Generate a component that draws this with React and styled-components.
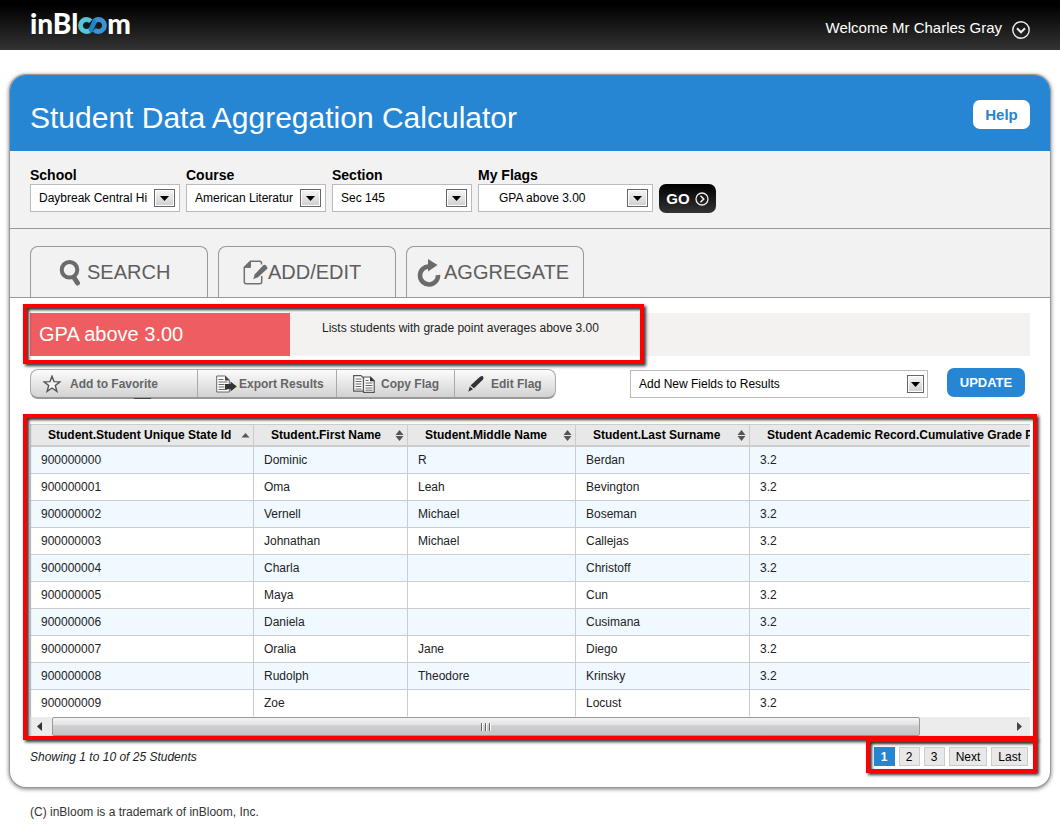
import React from "react";
import styled, { createGlobalStyle, css } from "styled-components";

const GlobalStyle = createGlobalStyle`
  *, *::before, *::after { box-sizing: border-box; }
  body {
    margin: 0;
    background: #fff;
    color: #222;
    font: 12px/16px "Liberation Sans", Arial, sans-serif;
  }
  button, select { font-family: inherit; margin: 0; }
`;

const TopBar = styled.header`
  display: flex;
  align-items: center;
  justify-content: space-between;
  height: 50px;
  padding: 0 30px;
  background: linear-gradient(#000 10%, #333);
`;

const Logo = styled.a`
  display: flex;
  align-items: baseline;
  color: #fff;
  font: 900 28px/28px Lato, "Liberation Sans", sans-serif;
  text-decoration: none;
  padding-bottom: 4px;
  svg { display: block; }
`;

const UserMenu = styled.button`
  display: flex;
  align-items: center;
  gap: 10px;
  padding: 9px 0 0;
  border: 0;
  background: none;
  color: #fff;
  font-size: 15px;
  line-height: 18px;
  span { padding-bottom: 4px; }
`;

const Page = styled.div`
  padding: 25px 10px 0;
`;

const Card = styled.main`
  border-radius: 16px;
  background: #fff;
  box-shadow: 0 0 0 1px #999, 0 1px 4px 1px #777;
`;

const TitleBand = styled.div`
  display: flex;
  align-items: center;
  justify-content: space-between;
  height: 76px;
  padding: 2px 20px 0;
  border-radius: 16px 16px 0 0;
  background: #2686d4;
`;

const Title = styled.h1`
  margin: 0;
  padding-top: 8px;
  color: #fff;
  font-size: 30px;
  line-height: 34px;
  font-weight: 400;
`;

const HelpButton = styled.button`
  width: 57px;
  height: 29px;
  padding: 0;
  border: 0;
  border-radius: 7px;
  background: #fff;
  color: #2686d4;
  font-size: 15px;
  font-weight: 700;
`;

const FilterBand = styled.form`
  display: flex;
  align-items: flex-end;
  gap: 6px;
  height: 78px;
  padding: 0 20px 16px;
  border-bottom: 1px solid #999;
  background: #f2f2f2;
`;

const Field = styled.div`
  display: flex;
  flex-direction: column;
  width: ${(p) => p.$width}px;
`;

const FieldLabel = styled.label`
  color: #000;
  font-size: 14px;
  line-height: 18px;
  font-weight: 700;
`;

const SelectBox = styled.div`
  position: relative;
  width: ${(p) => (p.$width ? `${p.$width}px` : "100%")};
`;

const Select = styled.select`
  display: block;
  appearance: none;
  width: 100%;
  height: 28px;
  padding: 0 32px 0 ${(p) => p.$indent || 8}px;
  border: 1px solid #bbb;
  border-radius: 0;
  background: #fff;
  color: #000;
  font-size: 12px;
`;

const Arrow = styled.span`
  position: absolute;
  top: 5px;
  right: ${(p) => (p.$narrow ? 4 : 5)}px;
  display: flex;
  align-items: center;
  justify-content: center;
  width: ${(p) => (p.$narrow ? 17 : 21)}px;
  height: 18px;
  border: 1px solid #666;
  background: linear-gradient(#f6f6f6, #cfcfcf);
  box-shadow: inset 0 0 0 1px #fff;
  pointer-events: none;
`;

const GoButton = styled.button`
  display: flex;
  align-items: center;
  justify-content: center;
  gap: 5px;
  width: 57px;
  height: 29px;
  margin-bottom: -1px;
  padding: 0;
  border: 0;
  border-radius: 7px;
  background: linear-gradient(#000, #333);
  color: #fff;
  font-size: 15px;
  font-weight: 700;
`;

const TabBand = styled.nav`
  display: flex;
  align-items: flex-end;
  gap: 10px;
  height: 69px;
  padding: 0 20px;
  border-bottom: 1px solid #999;
  background: #f2f2f2;
`;

const Tab = styled.button`
  display: flex;
  align-items: center;
  gap: ${(p) => p.$gap}px;
  width: 178px;
  height: 51px;
  padding: 1px 0 0 ${(p) => p.$pad}px;
  border: 1px solid #999;
  border-bottom: 0;
  border-radius: 8px 8px 0 0;
  background: #f2f2f2;
  color: #5e5e5e;
  font-size: 20px;
  svg { flex: none; }
`;

const Content = styled.div`
  padding: 15px 20px 21px;
`;

const Highlight = styled.div`
  position: absolute;
  top: -${(p) => p.$top}px;
  right: -${(p) => p.$right}px;
  bottom: -${(p) => p.$bottom}px;
  left: -${(p) => p.$left}px;
  border: 4px solid #f00;
  box-shadow: 2px 2px 3px #333, inset 2px 2px 3px #333;
  pointer-events: none;
`;

const Banner = styled.section`
  display: flex;
  height: 43px;
  background: #f3f2f1;
`;

const FlagInfo = styled.div`
  position: relative;
  display: flex;
  width: 607px;
`;

const FlagName = styled.h2`
  width: 260px;
  margin: 0;
  padding: 0 9px;
  background: #ee5e60;
  color: #fff;
  font-size: 20px;
  line-height: 43px;
  font-weight: 400;
`;

const FlagText = styled.p`
  margin: 0;
  padding: 7px 0 0 32px;
`;

const Actions = styled.div`
  display: flex;
  align-items: flex-start;
  margin-top: 13px;
  padding-right: 5px;
`;

const ButtonBar = styled.div`
  position: relative;
  display: flex;
  height: 30px;
  margin-right: auto;
  border: 1px solid #aaa;
  border-bottom: 2px solid #999;
  border-radius: 8px;
  background: linear-gradient(#fcfcfc, #d2d2d2);
  &::after {
    content: "";
    position: absolute;
    bottom: -2px;
    left: 103px;
    width: 17px;
    height: 1px;
    background: #444;
  }
`;

const BarButton = styled.button`
  display: flex;
  align-items: center;
  gap: ${(p) => p.$gap}px;
  width: ${(p) => p.$width}px;
  padding: 0 0 0 ${(p) => p.$pad}px;
  border: 0;
  border-right: 1px solid #aaa;
  background: none;
  color: #666;
  font-size: 12px;
  font-weight: 700;
  &:last-child { border-right: 0; }
  svg { flex: none; }
`;

const FieldPicker = styled.div`
  display: flex;
  align-items: flex-start;
  gap: 19px;
`;

const PickerSelect = styled.div`
  padding-top: 1px;
`;

const UpdateButton = styled.button`
  width: 78px;
  height: 29px;
  margin-top: -1px;
  padding: 0;
  border: 0;
  border-radius: 7px;
  background: #2686d4;
  color: #fff;
  font-size: 13px;
  font-weight: 700;
`;

const TablePanel = styled.div`
  position: relative;
  margin-top: 25px;
`;

const TableClip = styled.div`
  overflow: hidden;
  border-left: 1px solid #ccc;
`;

const Table = styled.table`
  width: 111%;
  table-layout: fixed;
  border-collapse: separate;
  border-spacing: 0;
`;

const HeadCell = styled.th`
  height: 23px;
  padding: 0 3px 0 17px;
  border-top: 1px solid #ccc;
  border-right: 1px solid #ccc;
  border-bottom: 2px solid #ccc;
  background: #e8e8e8;
  color: #000;
  font-size: 12px;
  line-height: 16px;
  text-align: left;
  white-space: nowrap;
  > div {
    display: flex;
    align-items: center;
    justify-content: space-between;
  }
`;

const Cell = styled.td`
  height: 27px;
  padding: 0 10px;
  border-right: 1px solid #ccc;
  border-bottom: 1px solid #ccc;
`;

const Row = styled.tr`
  background: #fff;
  &:nth-child(odd) { background: #f0f9ff; }
  &:last-child td { border-bottom-color: #fff; }
`;

const ScrollBar = styled.div`
  display: flex;
  height: 19px;
  background: #ececec;
`;

const ScrollButton = styled.button`
  display: flex;
  align-items: center;
  width: ${(p) => p.$width}px;
  padding: 0 0 0 ${(p) => p.$pad}px;
  border: 0;
  background: none;
`;

const Track = styled.div`
  flex: 1;
  display: flex;
`;

const Thumb = styled.div`
  display: flex;
  align-items: center;
  justify-content: center;
  width: 90%;
  border: 1px solid #999;
  border-radius: 2px;
  background: linear-gradient(#f4f4f4, #e2e2e2 40%, #cfcfd1 45%, #c4c4c6);
`;

const TableFoot = styled.div`
  display: flex;
  align-items: center;
  justify-content: space-between;
  margin-top: 11px;
  padding-right: 2px;
  font-style: italic;
`;

const Pager = styled.nav`
  position: relative;
  display: flex;
  gap: 4px;
`;

const PageButton = styled.button`
  min-width: 21px;
  height: 19px;
  padding: 0 6px;
  border: 1px solid #ccc;
  background: #e8e8e8;
  color: #000;
  font-size: 12px;
  line-height: 16px;
  ${(p) =>
    p.$active &&
    css`
      border-color: #2686d4;
      background: #2686d4;
      color: #fff;
      font-weight: 700;
    `}
`;

const Footer = styled.footer`
  padding: 17px 20px 4px;
  color: #333;
`;

const DownTriangle = () => (
  <svg width="9" height="5" viewBox="0 0 9 5" aria-hidden="true">
    <path d="M0 0h9L4.500 5z" fill="#000" />
  </svg>
);

const Loops = () => (
  <svg width="29" height="17" viewBox="0 0 29 17" fill="none" aria-hidden="true">
    <path d="M12.800 4.300A6 6 0 1 0 12.800 12.700" stroke="#56c4dc" strokeWidth="4.800" />
    <path d="M16 4.500A6 6 0 1 1 16.200 12.700" stroke="#3e92d4" strokeWidth="4.800" />
    <path d="M11.200 13.800C15 12 14 7 17.600 3.600" stroke="#1c86c8" strokeWidth="4.800" />
  </svg>
);

const CircleDown = () => (
  <svg width="18" height="18" viewBox="0 0 18 18" fill="none" stroke="#eee" aria-hidden="true">
    <circle cx="9" cy="9" r="8.200" strokeWidth="1.400" />
    <path d="M5 7.300l4 4 4-4" strokeWidth="2" />
  </svg>
);

const CircleRight = () => (
  <svg width="14" height="14" viewBox="0 0 14 14" fill="none" stroke="#eee" aria-hidden="true">
    <circle cx="7" cy="7" r="6" strokeWidth="1.300" />
    <path d="M5.500 3.800L8.700 7l-3.200 3.200" strokeWidth="1.600" />
  </svg>
);

const SearchIcon = () => (
  <svg width="22" height="26" viewBox="0 0 22 26" fill="none" stroke="#6b6b6b" aria-hidden="true">
    <circle cx="10.500" cy="9.800" r="7.800" strokeWidth="4" />
    <path d="M15 17.500l3.500 5.500" strokeWidth="5" strokeLinecap="round" />
  </svg>
);

const EditPageIcon = () => (
  <svg width="25" height="25" viewBox="0 0 25 25" fill="none" aria-hidden="true">
    <path
      d="M18.500 4.500V3q0-1.800-1.800-1.800H7.500L1.300 7.400v14.300q0 2 2 2h13.400q2 0 2-2V16"
      stroke="#707070"
      strokeWidth="1.500"
    />
    <path d="M7.500 1.200v6.200H1.300z" fill="#707070" stroke="#707070" />
    <path d="M20 5.500q1.500-1.500 3 0t1.500 3L15 17.200l-4.800 2 1.600-5z" fill="#6b6b6b" />
  </svg>
);

const RefreshIcon = () => (
  <svg width="24" height="28" viewBox="0 0 24 28" aria-hidden="true">
    <path d="M12 7.500A9 9 0 1 0 21 16" fill="none" stroke="#6b6b6b" strokeWidth="4.600" />
    <path d="M11 0l9.500 6L11 12.500z" fill="#6b6b6b" />
  </svg>
);

const StarIcon = () => (
  <svg width="18" height="18" viewBox="0 0 18 18" aria-hidden="true">
    <path
      d="M9 1.300l2 5.300 5.900.3-4.600 3.600 1.600 5.900L9 13l-4.900 3.400 1.600-5.900L1.100 6.900 7 6.600z"
      fill="#f4f4f4"
      stroke="#555"
      strokeWidth="1.400"
    />
  </svg>
);

const ExportIcon = () => (
  <svg width="21" height="18" viewBox="0 0 21 18" fill="none" aria-hidden="true">
    <path d="M.7 1h8.600l4 4v12H.7z" fill="#fff" stroke="#666" />
    <path d="M9 .8v4.700h4.700z" fill="#444" />
    <path d="M2.500 4.500h5M2.500 7h9M2.500 9.500h6M2.500 12h6M2.500 14.500h9" stroke="#666" />
    <path d="M9 9h5.500V6.500l6.300 5-6.300 5V14H9z" fill="#333" />
  </svg>
);

const CopyIcon = () => (
  <svg width="22" height="18" viewBox="0 0 22 18" fill="none" aria-hidden="true">
    <path d="M.7.7H8l2.500 2.500v13H.7z" fill="#fff" stroke="#555" strokeWidth="1.200" />
    <path d="M2.500 4h6M2.500 6.500h6M2.500 9h6M2.500 11.500h6M2.500 14h6" stroke="#666" />
    <path d="M10.500 2h7l3.700 3.700v11.600H10.500z" fill="#fff" stroke="#555" strokeWidth="1.200" />
    <path d="M17 1.500v4.700h4.700z" fill="#333" />
    <path d="M12.500 5.500h3M12.500 8h7M12.500 10.500h7M12.500 13h7M12.500 15.200h7" stroke="#666" />
  </svg>
);

const PencilIcon = () => (
  <svg width="16" height="16" viewBox="0 0 16 16" fill="#333" aria-hidden="true">
    <path d="M10.300 2.300q3-2.800 4.500-2 1.300 1 0 3.500L6 12.300 2.500 9.500z" />
    <path d="M1.800 10.500l3.200 2.700L.3 15.700z" />
  </svg>
);

const SortIcon = ({ asc }) => (
  <svg width="9" height="11" viewBox="0 0 9 11" fill="#555" aria-hidden="true">
    {asc ? (
      <path d="M.5 7.500l4-4.500 4 4.500z" />
    ) : (
      <>
        <path d="M.5 5l4-5 4 5z" />
        <path d="M.5 6l4 5 4-5z" />
      </>
    )}
  </svg>
);

const Grip = () => (
  <svg width="12" height="8" viewBox="0 0 12 8" aria-hidden="true">
    <path d="M1.500 0v8M5.500 0v8M9.500 0v8" stroke="#666" />
    <path d="M2.500 0v8M6.500 0v8M10.500 0v8" stroke="#fff" />
  </svg>
);

const filters = [
  { id: "school", label: "School", value: "Daybreak Central High", width: 150 },
  { id: "course", label: "Course", value: "American Literature", width: 140 },
  { id: "section", label: "Section", value: "Sec 145", width: 140 },
  { id: "flags", label: "My Flags", value: "GPA above 3.00", width: 175, indent: 20 },
];

const columns = [
  { name: "Student.Student Unique State Id", width: 223, asc: true },
  { name: "Student.First Name", width: 154 },
  { name: "Student.Middle Name", width: 168 },
  { name: "Student.Last Surname", width: 174 },
  { name: "Student Academic Record.Cumulative Grade Point Average" },
];

const students = [
  ["900000000", "Dominic", "R", "Berdan", "3.2"],
  ["900000001", "Oma", "Leah", "Bevington", "3.2"],
  ["900000002", "Vernell", "Michael", "Boseman", "3.2"],
  ["900000003", "Johnathan", "Michael", "Callejas", "3.2"],
  ["900000004", "Charla", "", "Christoff", "3.2"],
  ["900000005", "Maya", "", "Cun", "3.2"],
  ["900000006", "Daniela", "", "Cusimana", "3.2"],
  ["900000007", "Oralia", "Jane", "Diego", "3.2"],
  ["900000008", "Rudolph", "Theodore", "Krinsky", "3.2"],
  ["900000009", "Zoe", "", "Locust", "3.2"],
];

const pages = ["1", "2", "3", "Next", "Last"];

export default function App() {
  return (
    <>
      <GlobalStyle />
      <TopBar>
        <Logo href="#" aria-label="inBloom">
          inBl
          <Loops />
          m
        </Logo>
        <UserMenu type="button">
          <span>Welcome Mr Charles Gray</span>
          <CircleDown />
        </UserMenu>
      </TopBar>
      <Page>
        <Card>
          <TitleBand>
            <Title>Student Data Aggregation Calculator</Title>
            <HelpButton type="button">Help</HelpButton>
          </TitleBand>
          <FilterBand onSubmit={(e) => e.preventDefault()}>
            {filters.map((f) => (
              <Field key={f.id} $width={f.width}>
                <FieldLabel htmlFor={f.id}>{f.label}</FieldLabel>
                <SelectBox>
                  <Select id={f.id} $indent={f.indent}>
                    <option>{f.value}</option>
                  </Select>
                  <Arrow>
                    <DownTriangle />
                  </Arrow>
                </SelectBox>
              </Field>
            ))}
            <GoButton type="submit">
              GO
              <CircleRight />
            </GoButton>
          </FilterBand>
          <TabBand>
            <Tab type="button" $pad={28} $gap={6}>
              <SearchIcon />
              SEARCH
            </Tab>
            <Tab type="button" $pad={24} $gap={0}>
              <EditPageIcon />
              ADD/EDIT
            </Tab>
            <Tab type="button" $pad={10} $gap={3}>
              <RefreshIcon />
              AGGREGATE
            </Tab>
          </TabBand>
          <Content>
            <Banner>
              <FlagInfo>
                <FlagName>GPA above 3.00</FlagName>
                <FlagText>Lists students with grade point averages above 3.00</FlagText>
                <Highlight $top={9} $right={7} $bottom={8} $left={7} />
              </FlagInfo>
            </Banner>
            <Actions>
              <ButtonBar>
                <BarButton type="button" $width={167} $pad={12} $gap={9}>
                  <StarIcon />
                  Add to Favorite
                </BarButton>
                <BarButton type="button" $width={139} $pad={18} $gap={2}>
                  <ExportIcon />
                  Export Results
                </BarButton>
                <BarButton type="button" $width={118} $pad={16} $gap={6}>
                  <CopyIcon />
                  Copy Flag
                </BarButton>
                <BarButton type="button" $width={100} $pad={13} $gap={7}>
                  <PencilIcon />
                  Edit Flag
                </BarButton>
              </ButtonBar>
              <FieldPicker>
                <PickerSelect>
                  <SelectBox $width={298}>
                    <Select aria-label="Add New Fields to Results">
                      <option>Add New Fields to Results</option>
                    </Select>
                    <Arrow $narrow>
                      <DownTriangle />
                    </Arrow>
                  </SelectBox>
                </PickerSelect>
                <UpdateButton type="button">UPDATE</UpdateButton>
              </FieldPicker>
            </Actions>
            <TablePanel>
              <TableClip>
                <Table>
                  <colgroup>
                    {columns.map((c) => (
                      <col key={c.name} width={c.width} />
                    ))}
                  </colgroup>
                  <thead>
                    <tr>
                      {columns.map((c) => (
                        <HeadCell key={c.name} scope="col">
                          <div>
                            {c.name}
                            <SortIcon asc={c.asc} />
                          </div>
                        </HeadCell>
                      ))}
                    </tr>
                  </thead>
                  <tbody>
                    {students.map((s) => (
                      <Row key={s[0]}>
                        {s.map((value, i) => (
                          <Cell key={columns[i].name}>{value}</Cell>
                        ))}
                      </Row>
                    ))}
                  </tbody>
                </Table>
              </TableClip>
              <ScrollBar>
                <ScrollButton type="button" aria-label="Scroll left" $width={22} $pad={7}>
                  <svg width="5" height="9" viewBox="0 0 5 9" aria-hidden="true">
                    <path d="M5 0v9L0 4.500z" fill="#333" />
                  </svg>
                </ScrollButton>
                <Track>
                  <Thumb>
                    <Grip />
                  </Thumb>
                </Track>
                <ScrollButton type="button" aria-label="Scroll right" $width={14} $pad={1}>
                  <svg width="5" height="9" viewBox="0 0 5 9" aria-hidden="true">
                    <path d="M0 0v9l5-4.500z" fill="#444" />
                  </svg>
                </ScrollButton>
              </ScrollBar>
              <Highlight $top={10} $right={7} $bottom={4} $left={7} />
            </TablePanel>
            <TableFoot>
              <span>Showing 1 to 10 of 25 Students</span>
              <Pager aria-label="Pages">
                {pages.map((p, i) => (
                  <PageButton key={p} type="button" $active={i === 0}>
                    {p}
                  </PageButton>
                ))}
                <Highlight $top={9} $right={9} $bottom={7} $left={8} />
              </Pager>
            </TableFoot>
          </Content>
        </Card>
        <Footer>(C) inBloom is a trademark of inBloom, Inc.</Footer>
      </Page>
    </>
  );
}
